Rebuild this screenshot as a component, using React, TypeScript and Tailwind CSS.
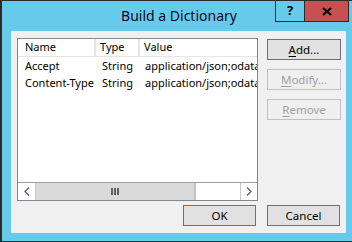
import React from "react";

const font = { fontFamily: '"Segoe UI", "Noto Sans", "Open Sans", sans-serif' };

function DlgButton({
  label,
  mnemonic,
  disabled,
  primary,
  className = "",
}: {
  label: string;
  mnemonic?: number;
  disabled?: boolean;
  primary?: boolean;
  className?: string;
}) {
  const border = disabled
    ? "border-[#bfbfbf] bg-[#efefef] text-[#a0a0a0]"
    : primary
    ? "border-[#3c7fb1] bg-[#e1e1e1] text-black"
    : "border-[#707070] bg-[#e1e1e1] text-black";
  const text =
    mnemonic === undefined ? (
      label
    ) : (
      <>
        {label.slice(0, mnemonic)}
        <span className="underline underline-offset-2">{label[mnemonic]}</span>
        {label.slice(mnemonic + 1)}
      </>
    );
  return (
    <div
      className={`h-[21px] border flex items-center justify-center text-[11.5px] leading-none ${border} ${className}`}
    >
      <span>{text}</span>
    </div>
  );
}

const rows = [
  { name: "Accept", type: "String", value: "application/json;odata=verbose" },
  { name: "Content-Type", type: "String", value: "application/json;odata=verbose" },
];

export default function App() {
  return (
    <div
      className="w-[352px] h-[242px] bg-[#66cbea] border-t border-l-2 border-b border-[#2b2b2b] flex flex-col overflow-hidden"
      style={font}
    >
      {/* title bar */}
      <div className="relative h-[30px] flex items-center justify-center shrink-0">
        <span className="text-[14px] text-[#0b0b1e] -mt-[1px] ml-[4px]">Build a Dictionary</span>
        <div className="absolute top-0 right-[3px] flex h-[21px]">
          <div className="w-[29px] border-l border-b border-[#2b2b2b] flex items-center justify-center text-[13px] font-bold text-black">
            ?
          </div>
          <div className="w-[45px] border-l border-r border-b border-[#2b2b2b] bg-[#c75050] flex items-center justify-center">
            <svg width="10" height="9" viewBox="0 0 10 9">
              <path d="M1 1 L9 8 M9 1 L1 8" stroke="#000" strokeWidth="2.2" />
            </svg>
          </div>
        </div>
      </div>

      {/* client area */}
      <div className="ml-[9px] mr-[6px] h-[202px] bg-[#f0f0f0] pt-[7px] pl-[6px] flex flex-col shrink-0">
        <div className="flex gap-[9px]">
          {/* list view */}
          <div className="w-[241px] h-[163px] border border-[#828790] bg-white flex flex-col overflow-hidden">
            <div className="h-[18px] flex text-[11px] text-black border-b border-[#e5e5e5] shrink-0">
              <div className="w-[78px] pl-[7px] border-r-2 border-[#e5e5e5] flex items-center">Name</div>
              <div className="w-[44px] pl-[4px] border-r-2 border-[#e5e5e5] flex items-center">Type</div>
              <div className="flex-1 pl-[4px] flex items-center">Value</div>
            </div>
            <div className="flex-1 pt-[1px]">
              {rows.map((r) => (
                <div key={r.name} className="h-[17px] flex text-[11px] text-black items-center whitespace-nowrap">
                  <div className="w-[78px] pl-[7px] shrink-0 overflow-hidden">{r.name}</div>
                  <div className="w-[44px] pl-[6px] shrink-0">{r.type}</div>
                  <div className="pl-[5px] overflow-hidden">{r.value}</div>
                </div>
              ))}
            </div>
            {/* horizontal scrollbar */}
            <div className="h-[18px] flex border-t border-[#a0a0a0] bg-white shrink-0">
              <div className="w-[18px] flex items-center justify-center border-r border-[#c8c8c8]">
                <svg width="6" height="9" viewBox="0 0 6 9">
                  <path d="M5 0.5 L1 4.5 L5 8.5" stroke="#606060" strokeWidth="1.3" fill="none" />
                </svg>
              </div>
              <div className="w-[160px] bg-[#dadada] border-r-2 border-[#c2c2c2] flex items-center justify-center gap-[1px]">
                <div className="w-[2px] h-[7px] bg-[#606060]" />
                <div className="w-[2px] h-[7px] bg-[#606060]" />
                <div className="w-[2px] h-[7px] bg-[#606060]" />
              </div>
              <div className="flex-1" />
              <div className="w-[17px] flex items-center justify-center border-l border-[#c8c8c8]">
                <svg width="6" height="9" viewBox="0 0 6 9">
                  <path d="M1 0.5 L5 4.5 L1 8.5" stroke="#606060" strokeWidth="1.3" fill="none" />
                </svg>
              </div>
            </div>
          </div>

          {/* side buttons */}
          <div className="w-[74px] pt-[1px] flex flex-col gap-[9px]">
            <DlgButton label="Add..." mnemonic={0} />
            <DlgButton label="Modify..." mnemonic={0} disabled />
            <DlgButton label="Remove" mnemonic={0} disabled />
          </div>
        </div>

        <div className="flex gap-[11px] pl-[166px] mt-[4px]">
          <DlgButton label="OK" primary className="w-[73px]" />
          <DlgButton label="Cancel" className="w-[73px]" />
        </div>
      </div>
    </div>
  );
}
